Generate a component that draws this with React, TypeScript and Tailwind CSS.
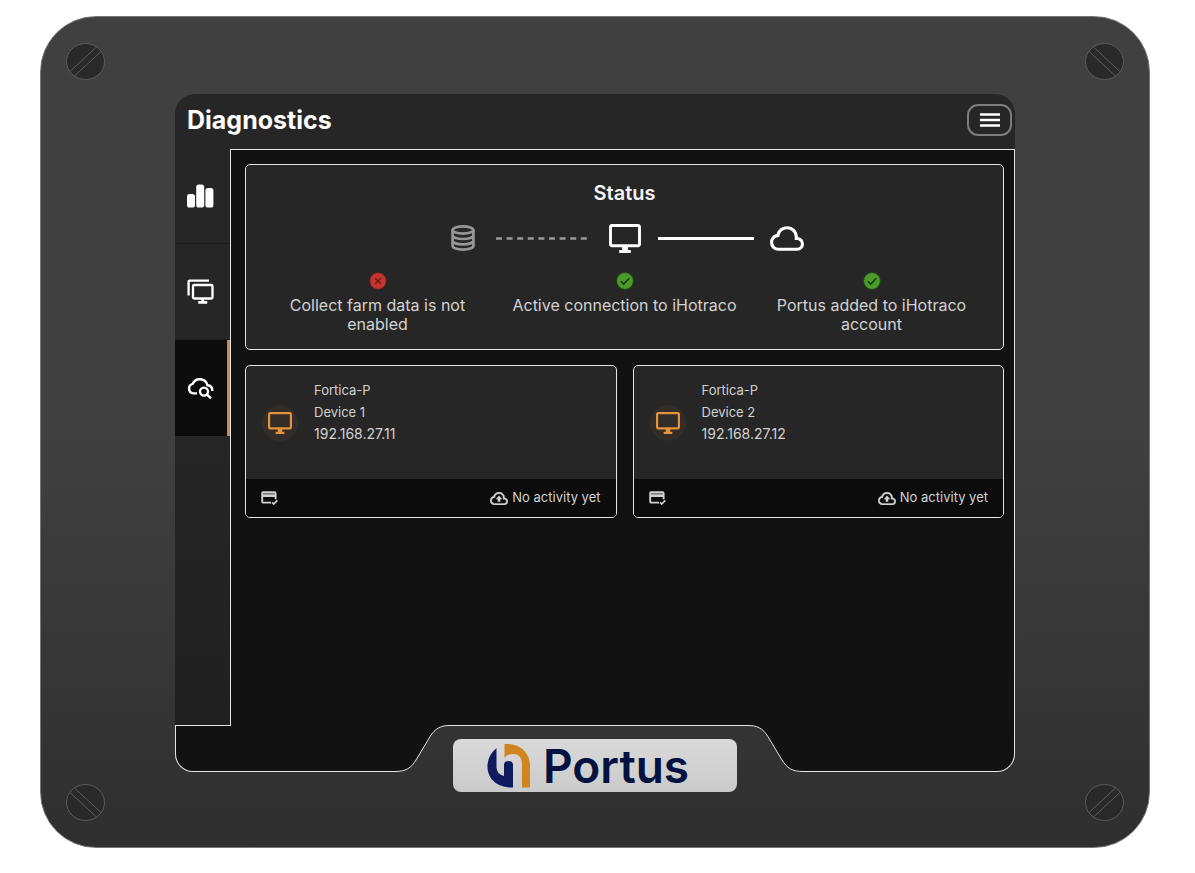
import type { ReactNode } from 'react';

const CLOUD =
  'M6.5 20q-2.28 0-3.89-1.57Q1 16.85 1 14.58q0-1.95 1.17-3.48 1.18-1.53 3.08-1.95.63-2.3 2.5-3.72Q9.63 4 12 4q2.93 0 4.96 2.04Q19 8.07 19 11q1.73.2 2.86 1.5 1.14 1.28 1.14 3 0 1.88-1.31 3.19T18.5 20zm0-2h12q1.05 0 1.77-.73.73-.72.73-1.77t-.73-1.77Q19.55 13 18.5 13H17v-2q0-2.07-1.46-3.54Q14.08 6 12 6 9.93 6 8.46 7.46 7 8.93 7 11h-.5q-1.45 0-2.47 1.03Q3 13.05 3 14.5t1.03 2.5q1.02 1 2.47 1z';

function ChartIcon() {
  return (
    <svg viewBox="0 0 27 24" className="h-6 w-[27px]" fill="currentColor" aria-hidden="true">
      <rect x="0" y="10" width="8" height="13.5" rx="2.6" />
      <rect x="9.2" y="0.5" width="8" height="23" rx="2.6" />
      <rect x="18.4" y="4" width="8" height="19.5" rx="2.6" />
    </svg>
  );
}

function DevicesIcon() {
  return (
    <svg viewBox="0 0 27 25" className="h-[25px] w-[27px]" fill="none" stroke="currentColor" strokeWidth="2.3" aria-hidden="true">
      <path d="M22 1.6H2.6q-1 0-1 1V16.5" />
      <rect x="6" y="6" width="19.5" height="13.5" rx="1.2" />
      <path d="M15.7 19.5v3.4M11.2 23.4h9" strokeWidth="2.8" />
    </svg>
  );
}

function CloudSearchIcon() {
  return (
    <svg viewBox="0 0 27 24" className="h-6 w-[27px]" fill="none" stroke="currentColor" strokeWidth="2.4" aria-hidden="true">
      <path d="M10 17.4H6.4a4.9 4.9 0 0 1-.7-9.6A7.8 7.8 0 0 1 20.4 9.2C23.4 9.4 25.4 11.6 25.4 15" />
      <circle cx="17" cy="15.6" r="4" />
      <path d="M19.8 18.4l4.2 4" />
    </svg>
  );
}

function MonitorIcon({ className }: { className: string }) {
  return (
    <svg viewBox="1 2 22 20" className={className} fill="currentColor" aria-hidden="true">
      <path d="M21 2H3c-1.1 0-2 .9-2 2v12c0 1.1.9 2 2 2h7v2H8v2h8v-2h-2v-2h7c1.1 0 2-.9 2-2V4c0-1.1-.9-2-2-2zm0 14H3V4h18v12z" />
    </svg>
  );
}

function DatabaseIcon() {
  return (
    <svg viewBox="0 0 24 26" className="h-[26px] w-6 text-[#979797]" fill="none" stroke="currentColor" strokeWidth="2.7" aria-hidden="true">
      <ellipse cx="12" cy="5" rx="10.4" ry="3.6" />
      <path d="M1.6 5v16c0 2 4.6 3.6 10.4 3.6s10.4-1.6 10.4-3.6V5M1.6 10.4C1.6 12.4 6.2 14 12 14s10.4-1.6 10.4-3.6M1.6 15.8c0 2 4.6 3.6 10.4 3.6s10.4-1.6 10.4-3.6" />
    </svg>
  );
}

function RegisteredIcon() {
  return (
    <svg viewBox="0 0 17 14" className="h-[14px] w-[17px]" fill="none" stroke="currentColor" strokeWidth="1.9" aria-hidden="true">
      <path d="M10 11.6H2.2q-1 0-1-1V2.2q0-1 1-1h11.4q1 0 1 1V8.2" />
      <path d="M1 4.6h13.8" strokeWidth="2.6" />
      <path d="M1.6 2.6h12.6" stroke="#8b8b8b" strokeWidth="0.9" />
      <path d="M11 11.4l1.7 1.6 3.6-3.6" strokeWidth="1.7" />
    </svg>
  );
}

function UploadIcon() {
  return (
    <svg viewBox="1 4 22 16" className="h-[13px] w-[18px]" fill="currentColor" aria-hidden="true">
      <path d={CLOUD} stroke="currentColor" strokeWidth="0.5" />
      <path d="M12 8.4l-4 4.4h2.4V16h3.2v-3.2H16z" />
    </svg>
  );
}

function StateIcon({ ok }: { ok: boolean }) {
  return (
    <svg viewBox="0 0 18 18" className="size-[18px]" fill="none" aria-hidden="true">
      <circle cx="9" cy="9" r="8.4" fill={ok ? '#4b9b2c' : '#c5352f'} stroke={ok ? '#1f4412' : '#571a18'} strokeWidth="0.8" />
      <path d={ok ? 'M4.8 9.2l2.9 2.9 5.6-5.8' : 'M6.2 6.2l5.6 5.6M11.8 6.2l-5.6 5.6'} stroke={ok ? '#16380b' : '#6d1a16'} strokeWidth="1.6" />
    </svg>
  );
}

function Screw({ className, flipped }: { className: string; flipped?: boolean }) {
  return (
    <svg viewBox="0 0 39 37" className={`absolute h-[37px] w-[39px] ${className}`} stroke="#5c5c5c" fill="none" aria-hidden="true">
      <ellipse cx="19.5" cy="18.5" rx="19" ry="18" fill="#292929" />
      <path d={flipped ? 'M4 8.5L30.5 33M8.5 4L35 28.5' : 'M35 8.5L8.5 33M30.5 4L4 28.5'} />
    </svg>
  );
}

function NavItem({ label, active, children }: { label: string; active?: boolean; children: ReactNode }) {
  return (
    <a
      href="#"
      aria-label={label}
      aria-current={active ? 'page' : undefined}
      className={`flex h-24 items-center pl-3 text-white ${
        active ? 'border-r-3 border-[#c98a5b] bg-[#0c0c0c]' : 'border-b border-[#1b1b1b]'
      }`}
    >
      {children}
    </a>
  );
}

const checks = [
  { ok: false, text: 'Collect farm data is not enabled' },
  { ok: true, text: 'Active connection to iHotraco' },
  { ok: true, text: 'Portus added to iHotraco account' },
];

function StatusCard() {
  return (
    <section className="flex h-[186px] flex-col rounded-[5px] border border-[#e4e4e4] bg-[#262626] px-2 pt-4">
      <h2 className="text-center text-xl leading-6 font-semibold text-[#f4f4f4]">Status</h2>
      <div className="mt-[15px] flex h-9 items-center justify-center text-white">
        <div className="flex w-9 justify-center">
          <DatabaseIcon />
        </div>
        <svg viewBox="0 0 96 3" className="mx-[15px] h-[3px] w-24" aria-hidden="true">
          <path d="M0 1.5h92" stroke="#9a9a9a" strokeWidth="2.4" strokeDasharray="6 4.6" />
        </svg>
        <div className="flex w-9 justify-center">
          <MonitorIcon className="h-[29px] w-8" />
        </div>
        <div className="mx-[15px] h-[3px] w-24 bg-white" />
        <div className="flex w-9 justify-center">
          <svg viewBox="1 4 22 16" className="h-[25px] w-[34px]" fill="currentColor" aria-hidden="true">
            <path d={CLOUD} />
          </svg>
        </div>
      </div>
      <ul className="mt-4 grid grid-cols-3">
        {checks.map((check) => (
          <li key={check.text} className="flex flex-col items-center px-2 text-center leading-[19px] text-[#d2d2d2]">
            <StateIcon ok={check.ok} />
            <span className="mt-1.5">{check.text}</span>
          </li>
        ))}
      </ul>
    </section>
  );
}

function DeviceCard({ name, ip }: { name: string; ip: string }) {
  return (
    <article className="flex h-[153px] flex-col overflow-hidden rounded-[5px] border border-[#e4e4e4] bg-[#262626]">
      <div className="flex flex-1 gap-4 pl-4">
        <div className="mt-[39px] flex size-9 items-center justify-center rounded-full bg-[#322d29] text-[#e4943a]">
          <MonitorIcon className="h-[22px] w-6" />
        </div>
        <div className="pt-[13px] text-[#d2d2d2]">
          <p className="text-[13px] leading-[22px]">Fortica-P</p>
          <h3 className="text-[13px] leading-[22px]">{name}</h3>
          <p className="text-sm leading-[22px]">{ip}</p>
        </div>
      </div>
      <footer className="flex h-[38px] items-center justify-between bg-[#0c0c0c] px-[15px] text-[13px] text-[#d2d2d2]">
        <RegisteredIcon />
        <span className="flex items-center gap-1">
          <UploadIcon />
          No activity yet
        </span>
      </footer>
    </article>
  );
}

function Nameplate() {
  return (
    <div className="flex h-[53px] w-[284px] shrink-0 items-center rounded-lg bg-linear-to-b from-[#dadada] to-[#cacaca] pl-[34px]">
      <svg viewBox="0 0 44 46" className="h-[46px] w-11 shrink-0" aria-hidden="true">
        <path d="M9.5 5V24Q9.5 31 17 33V22Q17 18 21.5 18Q26 18 26 22V44.5Q12 45 4.5 36Q0 30 .5 22Q1 12 9.5 5z" fill="#0f1a5f" />
        <path d="M17.5 1Q30 0 37 7.5Q43 14 43 23V44.5H35V20Q34.5 11 26 11Q20 11 17.5 15z" fill="#d0851f" />
      </svg>
      <span className="ml-3 text-[46px] leading-[52px] font-semibold text-[#04123f]">Portus</span>
    </div>
  );
}

// Lower edge of the display, cut out in the middle for the nameplate
function ScreenFoot() {
  return (
    <div className="grid grid-cols-[220fr_54px_300px_54px_212fr] grid-rows-[47px]">
      <div className="rounded-bl-[18px] border-b border-l border-[#e4e4e4] bg-[#121212]">
        <div className="w-[55px] border-t border-[#e4e4e4]" />
      </div>
      <svg viewBox="0 0 54 47" className="h-[47px] w-[54px]" aria-hidden="true">
        <path d="M0 47C11 47 16 43 21 35L33 15C38 6 43 .5 54 .5V0H0z" fill="#121212" />
        <path d="M0 46.5C11 46.5 16 43 21 35L33 15C38 6 43 .5 54 .5" fill="none" stroke="#e4e4e4" />
      </svg>
      <div className="border-t border-[#e4e4e4] pt-[13px] pl-1">
        <Nameplate />
      </div>
      <svg viewBox="0 0 54 47" className="h-[47px] w-[54px]" aria-hidden="true">
        <path d="M54 47C43 47 38 43 33 35L21 15C16 6 11 .5 0 .5V0H54z" fill="#121212" />
        <path d="M54 46.5C43 46.5 38 43 33 35L21 15C16 6 11 .5 0 .5" fill="none" stroke="#e4e4e4" />
      </svg>
      <div className="rounded-br-[18px] border-r border-b border-[#e4e4e4] bg-[#121212]" />
    </div>
  );
}

export default function App() {
  return (
    <div className="min-h-screen bg-white pt-4 pr-[45px] pb-6 pl-10 font-[Inter,sans-serif]">
      <div className="relative rounded-[56px] border border-[#777777] bg-linear-to-b from-[#404040] from-50% to-[#2f2f2f] px-[134px] pt-[77px] pb-[75px]">
        <Screw className="top-[26px] left-[25px]" />
        <Screw className="top-[26px] right-[25px]" flipped />
        <Screw className="bottom-[26px] left-[25px]" flipped />
        <Screw className="right-[25px] bottom-[26px]" />

        <header className="flex h-[55px] items-center justify-between rounded-t-[20px] bg-[#262626] pr-[3px] pb-[3px] pl-3">
          <h1 className="text-[25px] leading-8 font-bold text-white">Diagnostics</h1>
          <button type="button" aria-label="Menu" className="flex h-8 w-[45px] items-center justify-center rounded-[11px] border-2 border-[#7d7d7d]">
            <svg viewBox="0 0 20 14" className="h-[14px] w-5" stroke="#ffffff" strokeWidth="2.5" aria-hidden="true">
              <path d="M0 1.5h20M0 7h20M0 12.5h20" />
            </svg>
          </button>
        </header>

        <div className="flex min-h-[576px]">
          <nav className="-mt-px w-[55px] bg-linear-to-b from-[#262626] from-50% to-[#202020]">
            <NavItem label="Statistics">
              <ChartIcon />
            </NavItem>
            <NavItem label="Devices">
              <DevicesIcon />
            </NavItem>
            <NavItem label="Diagnostics" active>
              <CloudSearchIcon />
            </NavItem>
          </nav>
          <main className="flex flex-1 flex-col gap-[15px] border-t border-r border-l border-[#e4e4e4] bg-[#121212] pt-[14px] pr-[10px] pl-[14px]">
            <StatusCard />
            <div className="grid grid-cols-2 gap-4">
              <DeviceCard name="Device 1" ip="192.168.27.11" />
              <DeviceCard name="Device 2" ip="192.168.27.12" />
            </div>
          </main>
        </div>

        <ScreenFoot />
      </div>
    </div>
  );
}
